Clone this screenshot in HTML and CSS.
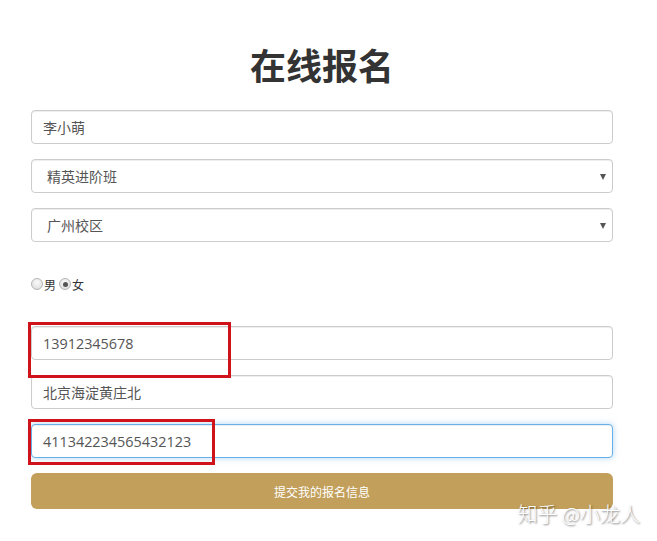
FILE: index.html
```html
<!DOCTYPE html>
<html lang="zh-CN">
<head>
<meta charset="utf-8">
<title>在线报名</title>
<link rel="stylesheet" href="styles.css">
</head>
<body>
<div class="page">
  <h1 class="title">在线报名</h1>
  <form class="form">
    <input class="field" type="text" value="李小萌">
    <div class="select-wrap">
      <select class="field select"><option>精英进阶班</option></select>
    </div>
    <div class="select-wrap">
      <select class="field select"><option>广州校区</option></select>
    </div>
    <div class="radios">
      <label class="radio"><input type="radio" name="sex" class="radio-input">男</label>
      <label class="radio"><input type="radio" name="sex" class="radio-input" checked>女</label>
    </div>
    <div class="marked">
      <input class="field field-num" type="text" value="13912345678">
      <span class="mark mark-phone"></span>
    </div>
    <input class="field" type="text" value="北京海淀黄庄北">
    <div class="marked">
      <input class="field field-num field-focus" type="text" value="411342234565432123">
      <span class="mark mark-id"></span>
    </div>
    <button class="submit" type="button">提交我的报名信息</button>
  </form>
  <div class="watermark">知乎 @小龙人</div>
</div>
</body>
</html>
```

FILE: styles.css
```css
html, body {
  margin: 0;
  padding: 0;
  background: #fff;
}

body {
  font-family: "Noto Sans CJK SC", "Microsoft YaHei", sans-serif;
  color: #555;
}

.page {
  position: relative;
  width: 657px;
  height: 541px;
  padding: 0 44px 0 31px;
  box-sizing: border-box;
}

.title {
  margin: 0;
  padding-top: 44px;
  height: 40px;
  line-height: 40px;
  font-size: 36px;
  font-weight: 700;
  color: #333;
  text-align: center;
  box-sizing: content-box;
}

.form {
  margin-top: 26px;
  display: flex;
  flex-direction: column;
  gap: 15px;
}

.field {
  display: block;
  width: 100%;
  height: 34px;
  box-sizing: border-box;
  border: 1px solid #ccc;
  border-radius: 4px;
  padding: 0 11px;
  font-family: "Open Sans", "Noto Sans CJK SC", sans-serif;
  font-size: 14px;
  color: #555;
  background: #fff;
  box-shadow: inset 0 1px 1px rgba(0,0,0,0.075);
  outline: none;
}

.field-num {
  font-size: 14.4px;
}

.field-focus {
  border-color: #66afe9;
  box-shadow: inset 0 1px 1px rgba(0,0,0,0.075), 0 0 6px rgba(102,175,233,0.5);
}

.select-wrap {
  position: relative;
}

.select {
  appearance: none;
  -webkit-appearance: none;
  padding-left: 15px;
}

.select-wrap::after {
  content: "";
  position: absolute;
  right: 7px;
  top: 15px;
  border-left: 3px solid transparent;
  border-right: 3px solid transparent;
  border-top: 6px solid #555;
  pointer-events: none;
}

.radios {
  height: 54px;
  display: flex;
  align-items: center;
  gap: 3px;
  font-size: 12px;
  color: #333;
}

.radio {
  display: flex;
  align-items: center;
}

.radio-input {
  appearance: none;
  -webkit-appearance: none;
  width: 12px;
  height: 12px;
  margin: 0 1px 0 0;
  border: 1px solid #b5b5b5;
  border-radius: 50%;
  background: radial-gradient(circle at 50% 35%, #fafafa 0%, #e3e3e3 70%, #d4d4d4 100%);
  box-sizing: border-box;
  position: relative;
}

.radio-input:checked::after {
  content: "";
  position: absolute;
  left: 2.5px;
  top: 2.5px;
  width: 5px;
  height: 5px;
  border-radius: 50%;
  background: #555;
}

.marked {
  position: relative;
}

.mark {
  position: absolute;
  border: 3px solid #d0121b;
  box-sizing: border-box;
  pointer-events: none;
}

.mark-phone {
  left: -3px;
  top: -4px;
  width: 203px;
  height: 56px;
}

.mark-id {
  left: -3px;
  top: -5px;
  width: 187px;
  height: 46px;
}

.submit {
  height: 36px;
  border: none;
  border-radius: 6px;
  background: #c29f5a;
  color: #fff;
  font-family: "Noto Sans CJK SC", sans-serif;
  font-size: 12px;
  cursor: pointer;
}

.watermark {
  position: absolute;
  right: 17px;
  top: 499px;
  font-size: 20px;
  font-weight: 300;
  color: #fff;
  text-shadow: 1px 1px 2px rgba(0,0,0,0.55);
  letter-spacing: 0;
}
```
